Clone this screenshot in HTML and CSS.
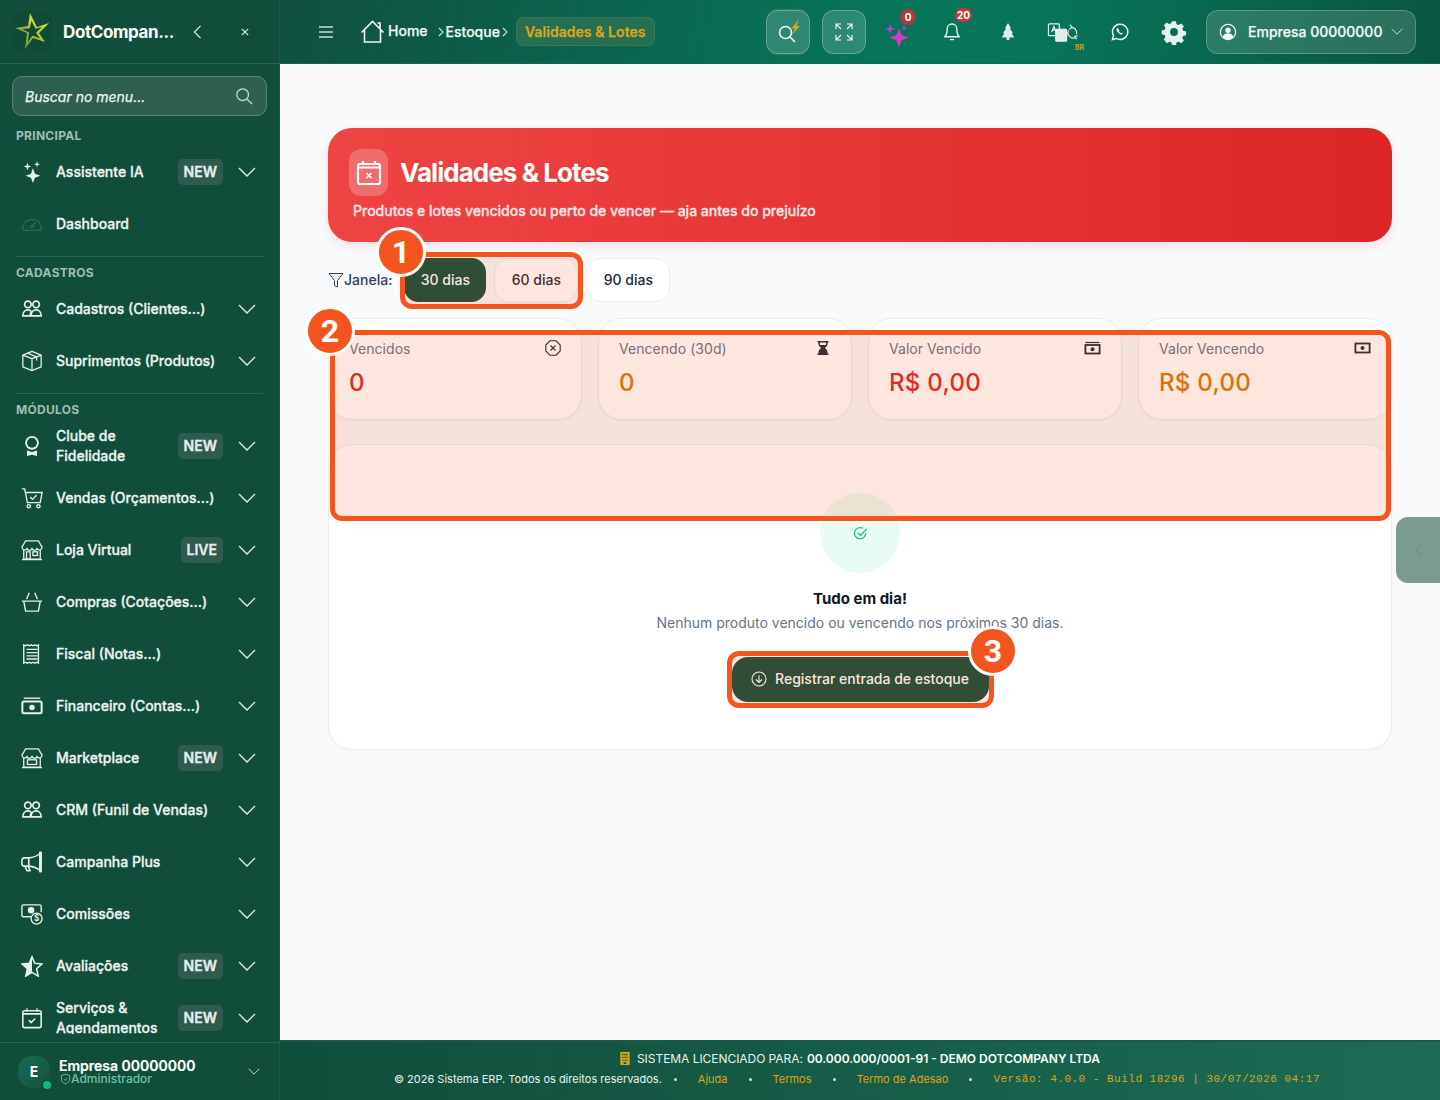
FILE: index.html
```html
<!DOCTYPE html>
<html lang="pt-BR">
<head>
<meta charset="utf-8">
<title>Validades &amp; Lotes</title>
<link rel="stylesheet" href="styles.css">
</head>
<body>
<svg class="defs" width="0" height="0" aria-hidden="true">
  <symbol id="chev" viewBox="0 0 18 10"><path d="M1 1l8 8 8-8" fill="none" stroke="currentColor" stroke-width="1.4"/></symbol>
  <symbol id="people" viewBox="0 0 24 24"><g fill="none" stroke="currentColor" stroke-width="1.8"><circle cx="7.5" cy="7" r="3.6"/><circle cx="16.5" cy="7" r="3.6"/><path d="M2 19.5c0-4 2.4-6.5 5.5-6.5 1.8 0 3 .7 3.8 1.9-.9 1.2-1.3 2.7-1.3 4.6z"/><path d="M11 19.5c0-4 2.4-6.5 5.5-6.5s5.5 2.5 5.5 6.5z"/></g></symbol>
</svg>
<div class="app">
  <aside class="sidebar">
    <div class="brand">
      <div class="logo">
        <svg viewBox="0 0 40 40" width="40" height="40"><defs><linearGradient id="lg" x1="0" y1="1" x2="1" y2="0"><stop offset="0" stop-color="#3f7a3a"/><stop offset=".6" stop-color="#c9cf35"/><stop offset="1" stop-color="#eee23a"/></linearGradient></defs><path fill="url(#lg)" fill-rule="evenodd" d="M18 1L25 15 37 11 27 21 33 30 21 26 13 37 15 21 3 16 16 14ZM19.500 9L17.800 16.200 10 17 17 20.500 16 30 20.500 23.500 28 26.500 24 20.800 30 15 23.500 16.800Z"/></svg>
      </div>
      <span class="brand-name">DotCompan...</span>
      <svg class="brand-back" viewBox="0 0 10 16" width="9" height="14"><path d="M8.5 1L1.5 8l7 7" fill="none" stroke="currentColor" stroke-width="1.5"/></svg>
      <svg class="brand-close" viewBox="0 0 10 10" width="8" height="8"><path d="M1 1l8 8M9 1l-8 8" fill="none" stroke="currentColor" stroke-width="1.5"/></svg>
    </div>
    <div class="search">
      <input class="search-input" type="text" placeholder="Buscar no menu...">
      <svg viewBox="0 0 20 20" width="18" height="18"><g fill="none" stroke="currentColor" stroke-width="1.5"><circle cx="8.5" cy="8.5" r="6.5"/><path d="M13.5 13.5l5.5 5.5"/></g></svg>
    </div>
    <nav class="nav">
      <div class="nav-label">PRINCIPAL</div>
      <a class="nav-item"><svg class="ico" viewBox="0 0 24 24"><path fill="currentColor" d="M12 9l2.2 5.8L20 17l-5.8 2.2L12 25l-2.2-5.8L4 17l5.800-2.200zM6 3l1 3 3 1-3 1-1 3-1-3-3-1 3-1zM16.500 1l.8 2.700 2.700.8-2.700.8-.8 2.700-.8-2.700-2.700-.8 2.700-.8z" transform="translate(1 -1)"/></svg><span class="nav-text">Assistente IA</span><span class="tag">NEW</span><svg class="chev"><use href="#chev"/></svg></a>
      <a class="nav-item"><svg class="ico ico-dim" viewBox="0 0 24 24"><g fill="none" stroke="currentColor" stroke-width="1.4"><path d="M2 16a10 9 0 0 1 20 0c0 1.500-.6 3-2 3H4c-1.400 0-2-1.500-2-3z"/><path d="M12 15l4-5M6 13h.5M8 9.500l.4.4M12 8v.5"/><circle cx="12" cy="15" r="1.300"/></g></svg><span class="nav-text">Dashboard</span></a>
      <div class="nav-rule"></div>
      <div class="nav-label">CADASTROS</div>
      <a class="nav-item"><svg class="ico"><use href="#people"/></svg><span class="nav-text">Cadastros (Clientes...)</span><svg class="chev"><use href="#chev"/></svg></a>
      <a class="nav-item"><svg class="ico" viewBox="0 0 24 24"><g fill="none" stroke="currentColor" stroke-width="1.4" stroke-linejoin="round"><path d="M12 1.500l10 4v13l-10 4-10-4v-13z"/><path d="M2 5.500l10 4 10-4M12 9.500v13M7 3.500l10 4v4"/></g></svg><span class="nav-text">Suprimentos (Produtos)</span><svg class="chev"><use href="#chev"/></svg></a>
      <div class="nav-rule"></div>
      <div class="nav-label">MÓDULOS</div>
      <a class="nav-item"><svg class="ico" viewBox="0 0 24 24"><g fill="none" stroke="currentColor" stroke-width="2"><circle cx="12" cy="8.500" r="6.500"/></g><path d="M6.500 17l5.500 1.500 5.500-1.500v6l-5.500-1.500-5.500 1.500z" fill="currentColor"/></svg><span class="nav-text">Clube de Fidelidade</span><span class="tag">NEW</span><svg class="chev"><use href="#chev"/></svg></a>
      <a class="nav-item"><svg class="ico" viewBox="0 0 24 24"><g fill="none" stroke="currentColor" stroke-width="1.500"><path d="M1 2h3l3 15h14l2-11H5"/><path d="M10 11l2.500 2.500L17 9"/><circle cx="8.500" cy="21" r="1.800"/><circle cx="19" cy="21" r="1.800"/></g></svg><span class="nav-text">Vendas (Orçamentos...)</span><svg class="chev"><use href="#chev"/></svg></a>
      <a class="nav-item"><svg class="ico" viewBox="0 0 24 24"><g fill="none" stroke="currentColor" stroke-width="1.400"><path d="M5 2h14l4 7a3 3 0 0 1-5.500 1.500 3 3 0 0 1-5.500 0 3 3 0 0 1-5.500 0A3 3 0 0 1 1 9z"/><path d="M3 12v10h18V12M1 22.500h22"/><rect x="6" y="14" width="4" height="8"/><rect x="13" y="14" width="5" height="4"/></g></svg><span class="nav-text">Loja Virtual</span><span class="tag">LIVE</span><svg class="chev"><use href="#chev"/></svg></a>
      <a class="nav-item"><svg class="ico" viewBox="0 0 24 24"><g fill="none" stroke="currentColor" stroke-width="1.500"><path d="M1 11h22M3 11l2 11h14l2-11M6 9l3-7M18 9l-3-7"/></g></svg><span class="nav-text">Compras (Cotações...)</span><svg class="chev"><use href="#chev"/></svg></a>
      <a class="nav-item"><svg class="ico" viewBox="0 0 24 24"><g fill="none" stroke="currentColor" stroke-width="1.500"><path d="M3 2l2 1 2-1 2 1 2-1 2 1 2-1 2 1 2-1v20l-2-1-2 1-2-1-2 1-2-1-2 1-2-1-2 1z"/><path d="M6 7h12M6 10.500h12M6 14h12M6 17.500h12"/></g></svg><span class="nav-text">Fiscal (Notas...)</span><svg class="chev"><use href="#chev"/></svg></a>
      <a class="nav-item"><svg class="ico" viewBox="0 0 24 24"><g fill="none" stroke="currentColor" stroke-width="2.200"><rect x="1.500" y="7" width="21" height="13" rx="1.500"/><path d="M3 3.500h18" stroke-width="1.500"/></g><circle cx="12" cy="13.500" r="3" fill="currentColor"/></svg><span class="nav-text">Financeiro (Contas...)</span><svg class="chev"><use href="#chev"/></svg></a>
      <a class="nav-item"><svg class="ico" viewBox="0 0 24 24"><g fill="none" stroke="currentColor" stroke-width="1.400"><path d="M5 2h14l4 7a3 3 0 0 1-5.500 1.500 3 3 0 0 1-5.500 0 3 3 0 0 1-5.500 0A3 3 0 0 1 1 9z"/><path d="M3 12v10h18V12M1 22.500h22"/><rect x="7" y="14" width="10" height="5"/></g></svg><span class="nav-text">Marketplace</span><span class="tag">NEW</span><svg class="chev"><use href="#chev"/></svg></a>
      <a class="nav-item"><svg class="ico"><use href="#people"/></svg><span class="nav-text">CRM (Funil de Vendas)</span><svg class="chev"><use href="#chev"/></svg></a>
      <a class="nav-item"><svg class="ico" viewBox="0 0 24 24"><g fill="none" stroke="currentColor" stroke-width="1.700" stroke-linejoin="round"><path d="M22 1.500v21h-1.500v-21zM20.500 3c-3 2.500-7 4-12 4.500v9c5 .5 9 2 12 4.500z"/><path d="M8.500 7.500H3.500C2 7.500 1 8.500 1 10v4c0 1.500 1 2.500 2.500 2.500h5M4.500 17l2 4.500h3.500l-2-4.500"/></g></svg><span class="nav-text">Campanha Plus</span><svg class="chev"><use href="#chev"/></svg></a>
      <a class="nav-item"><svg class="ico" viewBox="0 0 24 24"><g fill="none" stroke="currentColor" stroke-width="1.500"><path d="M11 15H2.500A1.500 1.500 0 0 1 1 13.500v-10A1.500 1.500 0 0 1 2.500 2h18A1.500 1.500 0 0 1 22 3.500V10"/><circle cx="11" cy="8" r="2.800" fill="currentColor"/><circle cx="17" cy="17" r="6"/></g><text class="ico-dollar" x="17" y="20" text-anchor="middle" fill="currentColor">$</text></svg><span class="nav-text">Comissões</span><svg class="chev"><use href="#chev"/></svg></a>
      <a class="nav-item"><svg class="ico" viewBox="0 0 24 24"><path d="M12 2l3 7 8 .7-6 5.300 1.800 8L12 19l-6.800 4L7 15 1 9.700 9 9z" fill="none" stroke="currentColor" stroke-width="1.700"/><path d="M12 2L9 9l-8 .7 6 5.300-1.800 8L12 19z" fill="currentColor"/></svg><span class="nav-text">Avaliações</span><span class="tag">NEW</span><svg class="chev"><use href="#chev"/></svg></a>
      <a class="nav-item"><svg class="ico" viewBox="0 0 24 24"><g fill="none" stroke="currentColor" stroke-width="1.700"><rect x="2" y="4" width="20" height="18.500" rx="2"/><path d="M2 7.500h20M6.500 1.500V5M17.500 1.500V5M8.500 14.500l2.500 2.500 4.500-4.500"/></g></svg><span class="nav-text">Serviços &amp; Agendamentos</span><span class="tag">NEW</span><svg class="chev"><use href="#chev"/></svg></a>
    </nav>
    <div class="account">
      <div class="avatar">E<span class="avatar-dot"></span></div>
      <div class="account-text">
        <div class="account-name">Empresa 00000000</div>
        <div class="account-role"><svg viewBox="0 0 16 16" width="11" height="12"><path d="M8 1l6 2v5c0 3.500-2.500 6-6 7-3.500-1-6-3.500-6-7V3zM5.500 8l2 2 3-3.500" fill="none" stroke="currentColor" stroke-width="1.300"/></svg>Administrador</div>
      </div>
      <svg class="account-chev"><use href="#chev"/></svg>
    </div>
  </aside>

  <div class="main">
    <header class="topbar">
      <svg class="burger" viewBox="0 0 14 12" width="14" height="12"><path d="M0 1h14M0 6h14M0 11h14" stroke="currentColor" stroke-width="1.300"/></svg>
      <div class="crumbs">
        <svg class="home" viewBox="0 0 24 24" width="25" height="24"><path d="M1 12.500L12 1.500l11 11M4 10v12h16V10M17 3h2.500v5" fill="none" stroke="currentColor" stroke-width="1.600"/></svg>
        <span class="crumb crumb-home">Home</span>
        <svg class="sep sep-first" viewBox="0 0 6 10" width="6" height="10"><path d="M1 1l4 4-4 4" fill="none" stroke="currentColor" stroke-width="1.100"/></svg>
        <span class="crumb">Estoque</span>
        <svg class="sep" viewBox="0 0 6 10" width="6" height="10"><path d="M1 1l4 4-4 4" fill="none" stroke="currentColor" stroke-width="1.100"/></svg>
        <span class="crumb-now">Validades &amp; Lotes</span>
      </div>
      <div class="tools">
        <button class="tool-btn tool-search"><svg viewBox="0 0 28 28" width="28" height="28"><g fill="none" stroke="#eef7f3" stroke-width="1.600"><circle cx="11.500" cy="14.500" r="6"/><path d="M16 19l5 5"/></g><path d="M25 1l-7.500 9.500H21L18 17l8-9h-3.500l2.500-7z" fill="#d3a827"/></svg></button>
        <button class="tool-btn tool-expand"><svg viewBox="0 0 18 18" width="18" height="18"><path d="M1 6V1h5M1 1l5 5M17 6V1h-5M17 1l-5 5M1 12v5h5M1 17l5-5M17 12v5h-5M17 17l-5-5" fill="none" stroke="#eef7f3" stroke-width="1.200"/></svg></button>
        <div class="tool tool-spark"><svg viewBox="0 0 28 28" width="28" height="28"><path d="M15 8l2.600 7 7 2.600-7 2.600L15 27.500l-2.600-7.300-7-2.600 7-2.600z" fill="#d13bc4"/><path d="M6 4l1.300 3.700L11 9 7.300 10.300 6 14 4.700 10.300 1 9l3.700-1.300z" fill="#b93fd0"/><path d="M20 5l.8 2.200L23 8l-2.200.8L20 11l-.8-2.200L17 8l2.200-.8z" fill="#b93fd0"/></svg><span class="count count-0">0</span></div>
        <div class="tool tool-bell"><svg viewBox="0 0 20 24" width="16" height="20"><path d="M10 2a6 6 0 0 0-6 6c0 5-1 8-3 10h18c-2-2-3-5-3-10a6 6 0 0 0-6-6zM7.500 21.500h5" fill="none" stroke="#eef7f3" stroke-width="1.700"/></svg><span class="count count-20">20</span></div>
        <div class="tool tool-tree"><svg viewBox="0 0 14 20" width="14" height="18"><path d="M7 0l3.500 6H9l3.500 5H11l3 5H8.500v3h-3v-3H0l3-5H1.500L5 6H3.500z" fill="#dfeee8"/></svg></div>
        <div class="tool tool-lang"><svg viewBox="0 0 34 22" width="32" height="20"><g fill="none" stroke="#eef7f3" stroke-width="1.300"><rect x="1" y="2" width="12" height="13" rx="1"/><rect x="9" y="8" width="12" height="13" rx="1" fill="#dfeee8"/><path d="M4.500 11l2.500-6 2.500 6M5.500 9h3"/><path d="M26 6a6 6 0 0 1 6 7M31 17a6 6 0 0 1-8-8M25 3l2 3-3 2M32 19l-2-3 3-1"/></g></svg><span class="lang-code">BR</span></div>
        <div class="tool tool-wa"><svg viewBox="0 0 20 20" width="18" height="18"><path d="M1.500 18.500l1.300-4.500A8.500 8.500 0 1 1 6 17.200z" fill="none" stroke="#eef7f3" stroke-width="1.600"/><path d="M7 5.500c-1.500 1 -1 3 .8 5s4 3 5.500 1.800l-1.600-1.800-1.100.7c-1-.5-1.600-1.200-2-2.200l.8-1z" fill="#eef7f3"/></svg></div>
        <div class="tool tool-gear"><svg viewBox="0 0 24 24" width="26" height="26"><path fill-rule="evenodd" fill="#e4f1ec" d="M10 1h4l.6 3 2.200.9 2.600-1.700 2.800 2.800-1.700 2.600.9 2.200 3 .6v4l-3 .6-.9 2.200 1.700 2.600-2.800 2.800-2.600-1.700-2.200.9-.6 3h-4l-.6-3-2.200-.9-2.600 1.700L1.600 19.800l1.700-2.600-.9-2.200-3-.6v-4l3-.6.9-2.200L1.600 5 4.400 2.200 7 3.900l2.200-.9zM12 8a4 4 0 1 0 0 8 4 4 0 0 0 0-8z" transform="translate(1.200 1.200) scale(.9)"/></svg></div>
        <button class="user-btn"><svg viewBox="0 0 20 20" width="18" height="18"><circle cx="10" cy="10" r="8.500" fill="none" stroke="#eef7f3" stroke-width="1.400"/><circle cx="10" cy="8" r="3" fill="#eef7f3"/><path d="M4 15.500c1-3 3.500-4 6-4s5 1 6 4a8 8 0 0 1-12 0z" fill="#eef7f3"/></svg><span class="user-name">Empresa 00000000</span><svg class="user-chev"><use href="#chev"/></svg></button>
      </div>
    </header>

    <main class="content">
      <section class="hero">
        <div class="hero-head">
          <div class="hero-icon"><svg viewBox="0 0 26 26" width="26" height="26"><g fill="none" stroke="#fff" stroke-width="2.200"><rect x="2" y="4" width="22" height="20" rx="2"/><path d="M2 7.500h22M7 1v4M19 1v4" /><path d="M10.500 13l5 5M15.500 13l-5 5" stroke-width="1.700"/></g></svg></div>
          <h1 class="hero-title">Validades &amp; Lotes</h1>
        </div>
        <p class="hero-sub">Produtos e lotes vencidos ou perto de vencer — aja antes do prejuízo</p>
      </section>

      <div class="filters">
        <span class="filter-label"><svg viewBox="0 0 16 16" width="16" height="16"><path d="M1 1.500h14L9.500 8.500V15l-3-1.500v-5z" fill="none" stroke="currentColor" stroke-width="1"/></svg>Janela:</span>
        <button class="chip chip-on">30 dias</button>
        <button class="chip">60 dias</button>
        <button class="chip">90 dias</button>
      </div>

      <div class="stats">
        <div class="stat"><div class="stat-head"><span>Vencidos</span><svg viewBox="0 0 16 16" width="16" height="16"><g fill="none" stroke="#1f2937" stroke-width="1.100"><path d="M5 .8h6L15.200 5v6L11 15.200H5L.8 11V5z"/><path d="M5.500 5.500l5 5M10.500 5.500l-5 5"/></g></svg></div><div class="stat-val val-red">0</div></div>
        <div class="stat"><div class="stat-head"><span>Vencendo (30d)</span><svg viewBox="0 0 16 16" width="16" height="16"><path fill="#1f2937" fill-rule="evenodd" d="M2.500 1h11v1.500h-1V4c0 2-1.500 3-2.700 4 1.200 1 2.700 2 2.700 4v1.500h1V15h-11v-1.500h1V12c0-2 1.500-3 2.700-4C5 7 3.500 6 3.500 4V2.500h-1zM5 2.500V4c0 .4.100.7.200 1h5.600c.1-.3.200-.6.200-1V2.500z"/></svg></div><div class="stat-val val-orange">0</div></div>
        <div class="stat"><div class="stat-head"><span>Valor Vencido</span><svg viewBox="0 0 16 16" width="17" height="16"><g fill="none" stroke="#1f2937"><rect x=".9" y="5" width="14.200" height="8.500" stroke-width="1.800"/><path d="M1 2.500h14" stroke-width="1.200"/></g><circle cx="8" cy="9.200" r="2" fill="#1f2937"/></svg></div><div class="stat-val val-red">R$ 0,00</div></div>
        <div class="stat"><div class="stat-head"><span>Valor Vencendo</span><svg viewBox="0 0 16 16" width="17" height="16"><rect x=".9" y="3.500" width="14.200" height="9" fill="none" stroke="#1f2937" stroke-width="1.800"/><circle cx="8" cy="8" r="2" fill="#1f2937"/></svg></div><div class="stat-val val-orange">R$ 0,00</div></div>
      </div>

      <section class="panel">
        <div class="ok-circle"><svg viewBox="0 0 16 16" width="15" height="15"><path d="M13.500 7.500A6 6 0 1 1 10.500 2.500M5 7l3 3 6.500-7" fill="none" stroke="#10b981" stroke-width="1.200"/></svg></div>
        <h2 class="panel-title">Tudo em dia!</h2>
        <p class="panel-sub">Nenhum produto vencido ou vencendo nos próximos 30 dias.</p>
        <button class="cta"><svg viewBox="0 0 16 16" width="16" height="16"><g fill="none" stroke="currentColor" stroke-width="1.100"><circle cx="8" cy="8" r="7"/><path d="M8 4.500v7M5 8.500l3 3 3-3"/></g></svg>Registrar entrada de estoque</button>
      </section>
    </main>

    <footer class="foot">
      <div class="foot-line"><svg viewBox="0 0 10 14" width="10" height="13"><path fill="#d9a521" fill-rule="evenodd" d="M0 0h10v14H0zM2 2v1.500h1.500V2zM4.300 2v1.500h1.500V2zM6.500 2v1.500H8V2zM2 5v1.500h1.500V5zM4.300 5v1.500h1.500V5zM6.500 5v1.500H8V5zM2 8v1.500h1.500V8zM4.300 8v1.500h1.500V8zM6.500 8v1.500H8V8zM3.500 11v2h3v-2z"/></svg><span>SISTEMA LICENCIADO PARA:</span> <strong>00.000.000/0001-91 - DEMO DOTCOMPANY LTDA</strong></div>
      <div class="foot-meta">
        <span>© 2026 Sistema ERP. Todos os direitos reservados.</span><i class="dot"></i>
        <a class="foot-link">Ajuda</a><i class="dot"></i>
        <a class="foot-link">Termos</a><i class="dot"></i>
        <a class="foot-link">Termo de Adesao</a><i class="dot"></i>
        <span class="foot-ver">Versão: 4.0.0 - Build 18296 | 30/07/2026 04:17</span>
      </div>
    </footer>
  </div>
</div>

<div class="side-tab"><svg viewBox="0 0 10 16" width="9" height="14"><path d="M8.500 1L1.500 8l7 7" fill="none" stroke="currentColor" stroke-width="1.200"/></svg></div>

<div class="spot spot-1"></div>
<div class="spot spot-2"></div>
<div class="spot spot-3"></div>
<div class="pin pin-1">1</div>
<div class="pin pin-2">2</div>
<div class="pin pin-3">3</div>
</body>
</html>
```
FILE: styles.css
```css
* { box-sizing: border-box; }
html, body { margin: 0; height: 100%; }
body {
  font-family: Inter, "Liberation Sans", sans-serif;
  background: #f8fafc;
  color: #0f172a;
  overflow: hidden;
  position: relative;
}
.defs { position: absolute; }
button { font-family: inherit; cursor: pointer; }
h1, h2, p { margin: 0; }

.app { display: grid; grid-template-columns: 280px 1fr; height: 1100px; }

/* Sidebar */
.sidebar {
  background: #114d3b;
  border-right: 1px solid #1e5a48;
  color: #e8f1ee;
  display: flex;
  flex-direction: column;
  height: 1100px;
  overflow: hidden;
}
.brand {
  height: 64px;
  flex: none;
  display: flex;
  align-items: center;
  padding: 0 0 0 12px;
  border-bottom: 1px solid #2a6453;
}
.logo {
  width: 40px; height: 40px;
  border-radius: 8px;
  background: #104a38;
  display: flex; align-items: center; justify-content: center;
  flex: none;
}
.brand-name {
  margin-left: 11px;
  width: 111px;
  font-size: 17px;
  font-weight: 700;
  letter-spacing: -0.4px;
  color: #fff;
  white-space: nowrap;
}
.brand-back { margin-left: 19px; color: #dce9e4; }
.brand-close { margin-left: 39px; color: #dce9e4; }
.search {
  margin: 12px 12px 0 12px;
  height: 40px;
  flex: none;
  display: flex;
  align-items: center;
  padding: 0 13px 0 12px;
  background: #2e5f50;
  border: 1px solid #5a8678;
  border-radius: 10px;
  color: #c4d6d0;
}
.search-input {
  flex: 1;
  min-width: 0;
  border: 0;
  outline: 0;
  background: transparent;
  font: italic 400 14px Inter, sans-serif;
  -webkit-text-stroke: .25px currentColor;
  color: #fff;
  padding: 0;
}
.search-input::placeholder { color: #eef5f2; opacity: 1; }
.nav {
  margin-top: 11px;
  height: 907px;
  flex: none;
  padding: 0 16px;
  overflow: hidden;
}
.nav-label {
  height: 16px;
  margin-bottom: 3px;
  font-size: 12px;
  line-height: 18px;
  font-weight: 700;
  letter-spacing: .3px;
  color: #a0bdb3;
}
.nav-rule {
  height: 1px;
  margin: 6px 0 7px;
  background: #2a6453;
}
.nav-item {
  display: flex;
  align-items: center;
  height: 52px;
  font-size: 14px;
  line-height: 20px;
  font-weight: 500;
  -webkit-text-stroke: .3px currentColor;
  color: #ecf3f0;
}
.ico { width: 22px; height: 22px; margin: 0 13px 0 5px; flex: none; color: #e6f0ec; }
.ico-dim { color: #2b6b56; }
.ico-dollar { font: 600 9px Inter, sans-serif; }
.nav-text { flex: 1; min-width: 0; }
.tag {
  flex: none;
  height: 26px;
  padding: 0 6px;
  display: flex;
  align-items: center;
  border-radius: 5px;
  background: #2f5b4f;
  font-size: 14px;
  font-weight: 600;
  color: #e6efeb;
}
.chev { width: 18px; height: 10px; margin: 0 7px 0 15px; flex: none; color: #e0ebe7; }
.account {
  height: 58px;
  margin-top: 8px;
  flex: none;
  border-top: 1px solid #2a6453;
  display: flex;
  align-items: center;
  padding: 0 18px;
}
.avatar {
  position: relative;
  width: 32px; height: 32px;
  border-radius: 14px;
  background: linear-gradient(135deg, #1a6a53, #14523f);
  display: flex; align-items: center; justify-content: center;
  color: #fff;
  font-size: 14px;
  font-weight: 700;
  flex: none;
}
.avatar-dot {
  position: absolute;
  right: -1px; bottom: -1px;
  width: 8px; height: 8px;
  border-radius: 50%;
  background: #10b981;
  box-shadow: 0 0 0 2px #114d3b;
}
.account-text { margin-left: 9px; flex: 1; min-width: 0; }
.account-name { font-size: 14px; line-height: 14px; font-weight: 600; color: #fff; -webkit-text-stroke: .2px currentColor; }
.account-role {
  display: flex; align-items: center;
  font-size: 12px; line-height: 12px;
  font-weight: 500;
  color: #6fc3a3;
  padding-left: 1px;
}
.account-chev { width: 12px; height: 7px; margin-right: 1px; color: #d5e3de; }

/* Main column */
.main { display: flex; flex-direction: column; height: 1100px; min-width: 0; }
.topbar {
  height: 64px;
  flex: none;
  display: flex;
  align-items: center;
  padding: 0 24px 0 39px;
  background: linear-gradient(100deg, #10503e 0%, #07745a 50%, #07755a 65%, #0a5640 100%);
  color: #eef7f3;
  border-bottom: 1px solid #0c6a52;
}
.burger { color: #c4dcd3; flex: none; }
.crumbs { display: flex; align-items: center; margin-left: 27px; font-size: 14px; font-weight: 500; -webkit-text-stroke: .25px currentColor; }
.home { margin-right: 3px; }
.crumb-home { position: relative; top: -1px; }
.sep { margin: 0 2px 0 2px; color: #cfe3db; }
.sep-first { margin-left: 10px; }
.crumb-now {
  margin-left: 6px;
  height: 29px;
  padding: 0 8px;
  display: flex; align-items: center;
  border: 1px solid #39775a;
  border-radius: 7px;
  background: #27704f;
  color: #d9a521;
  font-weight: 600;
  letter-spacing: .05px;
}
.tools { margin-left: auto; display: flex; align-items: center; }
.tool-btn {
  width: 44px; height: 44px;
  padding: 0;
  display: flex; align-items: center; justify-content: center;
  border-radius: 12px;
  border: 1px solid rgba(255,255,255,.25);
  background: rgba(255,255,255,.16);
}
.tool-search { box-shadow: 0 -2px 2px -2px #b3a33a, 0 2px 2px -2px #b3a33a; }
.tool-expand { margin-left: 12px; }
.tool { position: relative; width: 56px; height: 44px; display: flex; align-items: center; justify-content: center; flex: none; }
.tool-spark { margin-left: 2px; }
.tool-spark svg { margin: 4px 0 0 4px; }
.count {
  position: absolute;
  height: 16px;
  min-width: 16px;
  padding: 0 2px;
  border-radius: 8px;
  color: #fff;
  font-size: 10px;
  line-height: 16px;
  font-weight: 700;
  text-align: center;
}
.count-0 { left: 32px; top: -1px; background: #a83a42; }
.count-20 { left: 31px; top: -2px; height: 14px; line-height: 14px; background: #c2383f; }
.lang-code {
  position: absolute;
  left: 39px; top: 33px;
  font-size: 7px;
  font-weight: 600;
  color: #d9a521;
}
.tool-lang svg { margin-right: 3px; }
.tool.tool-gear { width: 52px; }
.user-btn {
  margin-left: 6px;
  width: 210px; height: 44px;
  padding: 0 12px;
  display: flex; align-items: center;
  border-radius: 12px;
  border: 1px solid rgba(255,255,255,.22);
  background: rgba(255,255,255,.14);
  color: #eef7f3;
  font-size: 14px;
  font-weight: 500;
  -webkit-text-stroke: .25px currentColor;
}
.user-name { margin-left: 11px; }
.user-chev { width: 12px; height: 7px; margin-left: auto; color: #cfe3db; }

/* Content */
.content { flex: 1; min-height: 0; padding: 64px 48px 0; }
.hero {
  height: 114px;
  padding: 21px 24px 0 21px;
  border-radius: 24px;
  background: linear-gradient(90deg, #ef4444, #dc2626);
  color: #fff;
  box-shadow: 0 4px 10px rgba(220,38,38,.12);
}
.hero-head { display: flex; align-items: center; }
.hero-icon {
  width: 39px; height: 47px;
  border-radius: 12px;
  background: rgba(255,255,255,.22);
  display: flex; align-items: center; justify-content: center;
}
.hero-title {
  margin-left: 12px;
  font-size: 26px;
  font-weight: 700;
  letter-spacing: -.95px;
}
.hero-sub { margin: 5px 0 0 4px; font-size: 14px; line-height: 20px; font-weight: 500; -webkit-text-stroke: .3px currentColor; color: #fde6e6; }
.filters {
  margin-top: 16px;
  height: 44px;
  display: flex;
  align-items: center;
  gap: 8px;
}
.filter-label {
  display: flex; align-items: center;
  margin-right: 4px;
  font-size: 14px;
  color: #334155;
  padding-bottom: 1px;
  font-weight: 500;
}
.chip {
  height: 44px;
  width: 84px;
  padding: 0 0 2px;
  border: 1px solid #e8ecf1;
  border-radius: 14px;
  background: #fff;
  color: #1e293b;
  font-size: 14px;
  font-weight: 500;
}
.chip-on { width: 81px; margin-right: 0; flex: 0 0 82px; background: #114d3b; border-color: #114d3b; color: #fff; }
.stats {
  margin-top: 16px;
  display: grid;
  grid-template-columns: repeat(4, 1fr);
  gap: 16px;
}
.stat {
  height: 102px;
  padding: 19px 20px 0;
  border: 1px solid #e8ecf1;
  border-radius: 24px;
  background: #fff;
  box-shadow: 0 1px 3px rgba(15,23,42,.04);
}
.stat-head {
  display: flex; align-items: center; justify-content: space-between;
  height: 20px;
  font-size: 14px;
  letter-spacing: .05px;
  color: #64748b;
}
.stat-val { margin-top: 9px; font-size: 24px; line-height: 32px; font-weight: 500; letter-spacing: .3px; }
.val-red { color: #dc2626; }
.val-orange { color: #d97706; }
.panel {
  margin-top: 24px;
  height: 306px;
  padding-top: 48px;
  display: flex;
  flex-direction: column;
  align-items: center;
  border: 1px solid #e8ecf1;
  border-radius: 24px;
  background: #fff;
  box-shadow: 0 1px 3px rgba(15,23,42,.04);
}
.ok-circle {
  width: 80px; height: 80px;
  border-radius: 50%;
  background: #e9fcf4;
  display: flex; align-items: center; justify-content: center;
}
.panel-title { margin-top: 16px; font-size: 15px; line-height: 20px; font-weight: 700; color: #0f172a; }
.panel-sub { margin-top: 4px; font-size: 14px; line-height: 20px; color: #64748b; }
.cta {
  margin-top: 24px;
  height: 45px;
  width: 257px;
  padding: 0 0 2px;
  display: flex; align-items: center; justify-content: center;
  gap: 8px;
  border: 0;
  border-radius: 16px;
  background: #114d3b;
  color: #fff;
  font-size: 14px;
  font-weight: 500;
}

/* Footer */
.foot {
  height: 60px;
  flex: none;
  padding-top: 8px;
  background: linear-gradient(90deg, #114d3b, #1c6c55);
  border-top: 2px solid #17594a;
  color: #eaf3ef;
  text-align: center;
}
.foot-line {
  display: flex; align-items: center; justify-content: center;
  gap: 4px;
  height: 16px;
  font-size: 12px;
  letter-spacing: -.05px;
}
.foot-line svg { margin-right: 3px; }
.foot-line strong { font-weight: 600; color: #fff; letter-spacing: 0; }
.foot-meta {
  margin-top: 5px;
  display: flex; align-items: center; justify-content: center;
  height: 16px;
  font-size: 11px;
}
.dot { width: 3px; height: 3px; margin: 0 21px 0 12px; border-radius: 50%; background: #d3e3dd; }
.foot-link { color: #d9a521; margin-right: 9px; }
.foot-ver { font-family: "Liberation Mono", monospace; font-size: 11px; letter-spacing: .5px; color: #d9a521; margin-right: 6px; }

/* Floating tab */
.side-tab {
  position: absolute;
  right: 0; top: 517px;
  width: 44px; height: 66px;
  padding-left: 18px;
  display: flex; align-items: center;
  border-radius: 12px 0 0 12px;
  background: #7b9a90;
  color: #6d8b81;
}

/* Guided-tour overlay */
.spot {
  position: absolute;
  border: 5px solid #f4551e;
  background: rgba(244, 81, 30, .145);
  pointer-events: none;
}
.spot-1 { left: 400px; top: 252px; width: 183px; height: 57px; border-radius: 12px; }
.spot-2 { left: 330px; top: 330px; width: 1061px; height: 191px; border-radius: 12px; }
.spot-3 { left: 727px; top: 651px; width: 267px; height: 57px; border-radius: 12px; }
.pin {
  position: absolute;
  width: 50px; height: 50px;
  border-radius: 50%;
  border: 3px solid #fff;
  background: #f4551e;
  color: #fff;
  font-family: Roboto, Inter, sans-serif;
  font-size: 32px;
  font-weight: 700;
  line-height: 44px;
  text-align: center;
}
.pin-1 { left: 376px; top: 227px; }
.pin-2 { left: 305px; top: 306px; }
.pin-3 { left: 968px; top: 626px; }
```
